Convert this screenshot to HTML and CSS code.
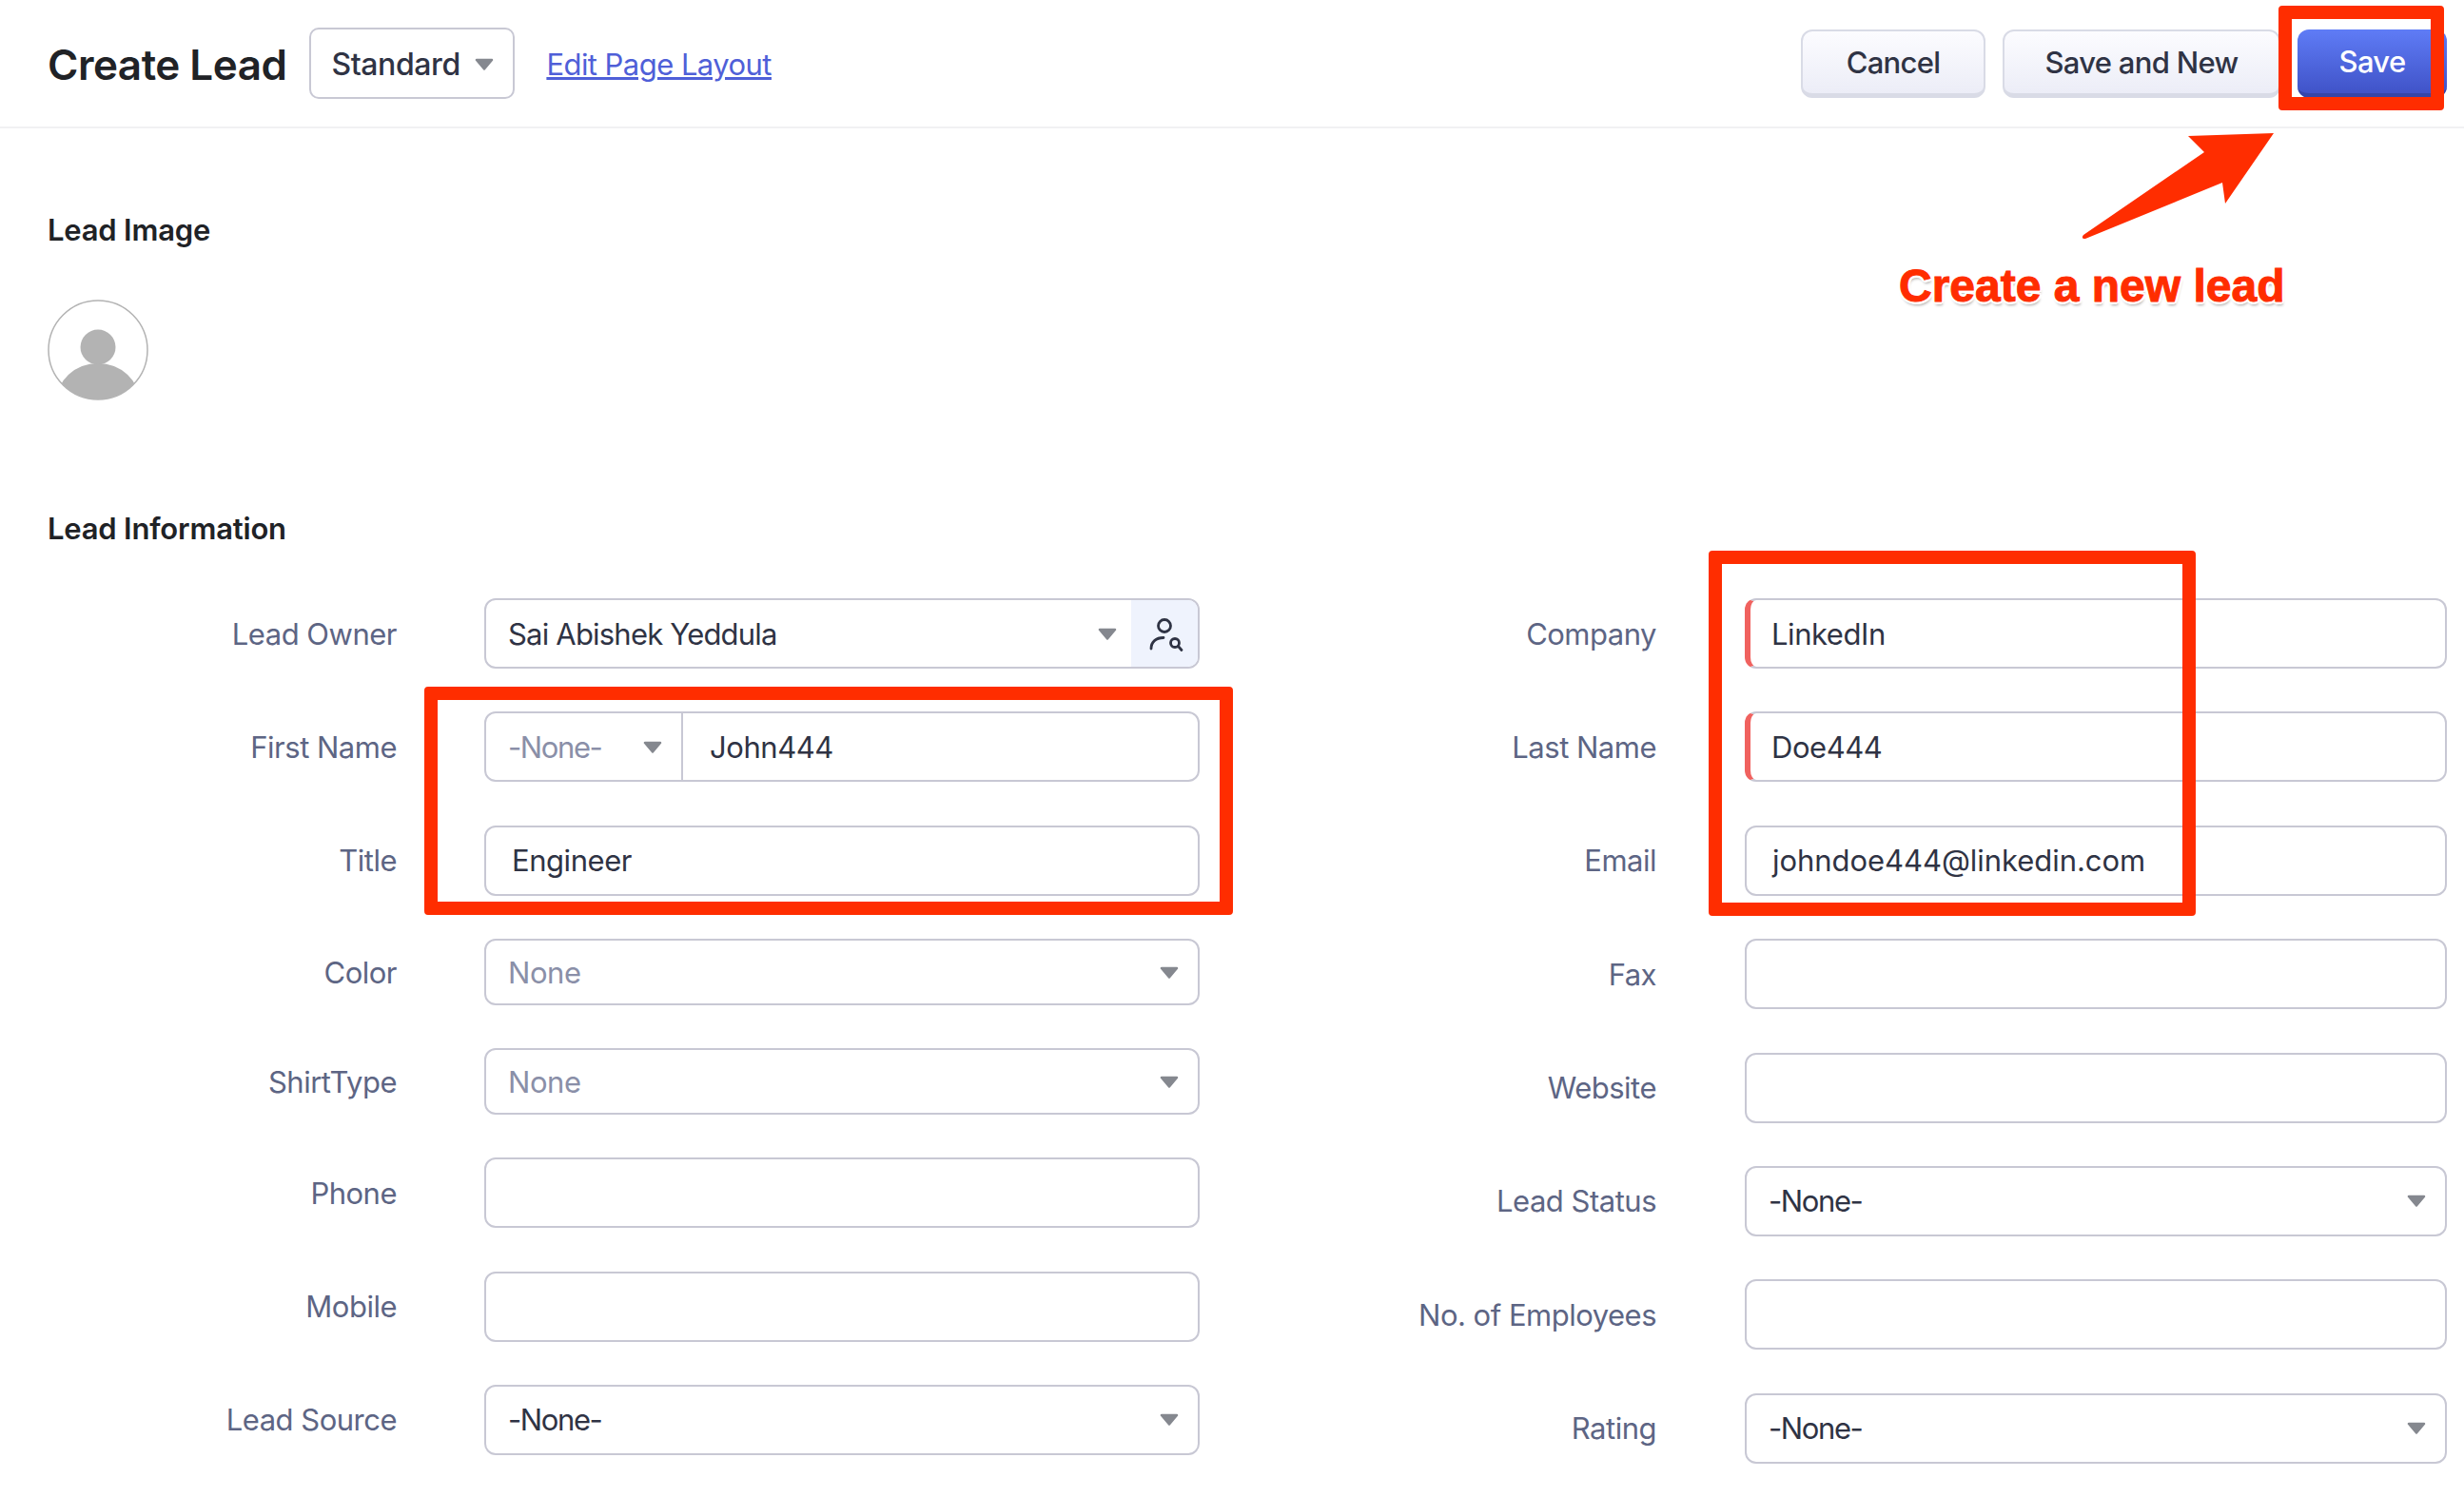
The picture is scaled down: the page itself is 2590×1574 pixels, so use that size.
FILE: index.html
```html
<!DOCTYPE html>
<html lang="en">
<head>
    <meta charset="UTF-8">
    <meta name="viewport" content="width=device-width, initial-scale=1.0">
    <title>Create Lead</title>
    <link rel="stylesheet" href="styles.css">
</head>
<body>
    <svg class="sprite" width="0" height="0">
        <symbol id="tri" viewBox="0 0 20 13">
            <path d="M2 2h16l-8 9.500z" fill="#85888f" stroke="#85888f" stroke-width="2.500" stroke-linejoin="round"/>
        </symbol>
    </svg>

    <header class="top-bar">
        <h1>Create Lead</h1>
        <div class="layout-select">Standard <svg class="caret"><use href="#tri"/></svg></div>
        <a class="edit-link" href="#">Edit Page Layout</a>
        <div class="actions">
            <button class="btn">Cancel</button>
            <button class="btn btn-wide">Save and New</button>
            <button class="btn btn-save">Save</button>
        </div>
    </header>

    <section class="image-section">
        <h2>Lead Image</h2>
        <svg class="avatar" viewBox="0 0 106 106">
            <defs><clipPath id="ring"><circle cx="53" cy="53" r="52"/></clipPath></defs>
            <circle cx="53" cy="53" r="52" fill="#fff" stroke="#b3b3b3" stroke-width="1.5"/>
            <g clip-path="url(#ring)" fill="#b3b3b3">
                <circle cx="53" cy="50" r="18.5"/>
                <ellipse cx="53" cy="108" rx="44" ry="41"/>
            </g>
        </svg>
    </section>

    <section class="info-section">
        <h2>Lead Information</h2>
        <div class="form-grid">
            <div class="form-col">
                <div class="row">
                    <label>Lead Owner</label>
                    <div class="field field-select">
                        <span class="value tight">Sai Abishek Yeddula</span>
                        <svg class="caret owner-caret"><use href="#tri"/></svg>
                        <span class="lookup">
                            <svg width="40" height="40" viewBox="0 0 40 40" fill="none" stroke="#2f3344" stroke-width="2.800" stroke-linecap="round">
                                <circle cx="20" cy="12" r="6.500"/>
                                <path d="M6 36c0-7 5-11.500 13-11.500"/>
                                <circle cx="31" cy="30" r="4.500"/>
                                <path d="M34.500 33.500l3.500 4"/>
                            </svg>
                        </span>
                    </div>
                </div>
                <div class="row">
                    <label>First Name</label>
                    <div class="field field-name">
                        <span class="salutation"><span class="none">-None-</span> <svg class="caret"><use href="#tri"/></svg></span>
                        <span class="value">John444</span>
                    </div>
                </div>
                <div class="row">
                    <label>Title</label>
                    <div class="field"><span class="value">Engineer</span></div>
                </div>
                <div class="row row-short">
                    <label>Color</label>
                    <div class="field field-select"><span class="value muted">None</span><svg class="caret"><use href="#tri"/></svg></div>
                </div>
                <div class="row row-short">
                    <label>ShirtType</label>
                    <div class="field field-select"><span class="value muted">None</span><svg class="caret"><use href="#tri"/></svg></div>
                </div>
                <div class="row">
                    <label>Phone</label>
                    <div class="field"></div>
                </div>
                <div class="row">
                    <label>Mobile</label>
                    <div class="field"></div>
                </div>
                <div class="row">
                    <label>Lead Source</label>
                    <div class="field field-select"><span class="value none">-None-</span><svg class="caret"><use href="#tri"/></svg></div>
                </div>
            </div>
            <div class="form-col">
                <div class="row">
                    <label>Company</label>
                    <div class="field required"><span class="value">LinkedIn</span></div>
                </div>
                <div class="row">
                    <label>Last Name</label>
                    <div class="field required"><span class="value">Doe444</span></div>
                </div>
                <div class="row">
                    <label>Email</label>
                    <div class="field"><span class="value email">johndoe444@linkedin.com</span></div>
                </div>
                <div class="row">
                    <label>Fax</label>
                    <div class="field"></div>
                </div>
                <div class="row">
                    <label>Website</label>
                    <div class="field"></div>
                </div>
                <div class="row">
                    <label>Lead Status</label>
                    <div class="field field-select"><span class="value none">-None-</span><svg class="caret"><use href="#tri"/></svg></div>
                </div>
                <div class="row">
                    <label>No. of Employees</label>
                    <div class="field"></div>
                </div>
                <div class="row">
                    <label>Rating</label>
                    <div class="field field-select"><span class="value none">-None-</span><svg class="caret"><use href="#tri"/></svg></div>
                </div>
            </div>
        </div>
    </section>

    <!-- red annotations drawn over the screenshot -->
    <div class="mark mark-save"></div>
    <div class="mark mark-name"></div>
    <div class="mark mark-company"></div>
    <svg class="arrow" width="220" height="120" viewBox="0 0 220 120">
        <path d="M202 0L112 3 129 20 2 107Q-1 111 4 111L148 52 151 74Z" fill="#ff2d00"/>
    </svg>
    <div class="note">Create a new lead</div>
</body>
</html>
```

FILE: styles.css
```css
* {
    box-sizing: border-box;
}

html, body {
    height: 100%;
}

body {
    margin: 0;
    font-family: 'Inter', 'Liberation Sans', sans-serif;
    background: #fff;
    color: #2f3344;
    overflow: hidden;
    position: relative;
}

.sprite {
    position: absolute;
}

.top-bar {
    display: flex;
    align-items: center;
    height: 135px;
    padding: 0 18px 0 50px;
    border-bottom: 2px solid #f1f1f3;
}

h1 {
    margin: 0;
    padding-top: 2px;
    font-size: 44px;
    font-weight: 600;
    letter-spacing: -0.5px;
    color: #202226;
}

h2 {
    margin: 0;
    font-size: 31px;
    font-weight: 600;
    letter-spacing: -0.2px;
    line-height: 40px;
    color: #202226;
}

.layout-select {
    display: flex;
    align-items: center;
    justify-content: space-between;
    width: 216px;
    height: 75px;
    margin-left: 24px;
    padding: 2px 20px 0 21px;
    border: 2px solid #c8c8d4;
    border-radius: 10px;
    font-size: 32px;
    font-weight: 500;
    letter-spacing: -0.4px;
}

.edit-link {
    margin-left: 33px;
    padding-top: 2px;
    font-size: 31px;
    letter-spacing: -0.55px;
    color: #4f5fd8;
}

.actions {
    display: flex;
    gap: 18px;
    margin-left: auto;
}

.btn {
    width: 194px;
    height: 72px;
    border: 2px solid #d9dbe6;
    border-bottom-width: 5px;
    border-radius: 12px;
    background: linear-gradient(#fcfcff, #ecedf7);
    font-family: inherit;
    font-size: 31px;
    font-weight: 500;
    letter-spacing: -0.7px;
    color: #2f3344;
}

.btn-wide {
    width: 292px;
}

.btn-save {
    width: 157px;
    padding-top: 2px;
    border: none;
    border-bottom: 5px solid #3545a8;
    background: linear-gradient(#5f7cf6, #4053c8);
    color: #fff;
}

.image-section {
    padding: 87px 0 0 50px;
}

.avatar {
    display: block;
    width: 106px;
    height: 106px;
    margin-top: 53px;
}

.info-section {
    margin-top: 115px;
    padding-left: 50px;
}

.form-grid {
    display: grid;
    grid-template-columns: 1211px 1197px;
    gap: 114px;
    margin-top: 53px;
}

.row {
    display: flex;
    align-items: center;
    gap: 92px;
    height: 74px;
    margin-bottom: 45.400px;
}

.form-col:last-child .row {
    gap: 93px;
}

.form-col:last-child .row label {
    width: 366px;
}

.row-short {
    height: 70px;
    margin-bottom: 45px;
}

.row label {
    flex: none;
    width: 367px;
    font-size: 31px;
    letter-spacing: -0.5px;
    text-align: right;
    color: #5d6584;
}

.field {
    flex: 1;
    display: flex;
    align-items: center;
    height: 100%;
    padding: 0 27px;
    border: 2px solid #c8c8d4;
    border-radius: 12px;
    font-size: 31px;
    letter-spacing: -0.45px;
    overflow: hidden;
}

.field-select {
    padding: 0 20px 0 23px;
    justify-content: space-between;
}

.field-name {
    padding: 0;
}

.required {
    padding-left: 22px;
    border-left: 6px solid #f0625f;
}

.tight {
    letter-spacing: -0.8px;
}

.email {
    letter-spacing: -0.05px;
}

.none {
    letter-spacing: -1.4px;
}

.muted {
    color: #8a8fa8;
}

.caret {
    flex: none;
    width: 20px;
    height: 13px;
}

.owner-caret {
    margin-left: auto;
    margin-right: 15px;
}

.field-select:has(.lookup) {
    padding-right: 0;
}

.lookup {
    display: flex;
    align-items: center;
    justify-content: center;
    width: 70px;
    height: 100%;
    background: #eff3fd;
}

.salutation {
    display: flex;
    align-items: center;
    justify-content: space-between;
    width: 207px;
    height: 100%;
    padding: 0 20px 0 23px;
    border-right: 2px solid #c8c8d4;
    color: #8a8fa8;
}

.field-name .value {
    margin-left: 28px;
}

/* annotations */
.mark {
    position: absolute;
    border: 14px solid #ff2d00;
    border-radius: 4px;
}

.mark-save {
    left: 2395px;
    top: 6px;
    width: 174px;
    height: 110px;
}

.mark-name {
    left: 446px;
    top: 722px;
    width: 850px;
    height: 240px;
}

.mark-company {
    left: 1796px;
    top: 579px;
    width: 512px;
    height: 384px;
}

.arrow {
    position: absolute;
    left: 2188px;
    top: 140px;
    overflow: visible;
}

.note {
    position: absolute;
    left: 1996px;
    top: 273px;
    font-family: 'Liberation Sans', sans-serif;
    font-size: 48px;
    font-weight: 700;
    color: #ff2d00;
    -webkit-text-stroke: 1px #ff2d00;
    text-shadow: -3px 0 #fff, 3px 0 #fff, 0 -3px #fff, 0 3px #fff, 2px 2px #fff, -2px -2px #fff, 2px -2px #fff, -2px 2px #fff, 1px 4px 3px #aaa;
}
```
